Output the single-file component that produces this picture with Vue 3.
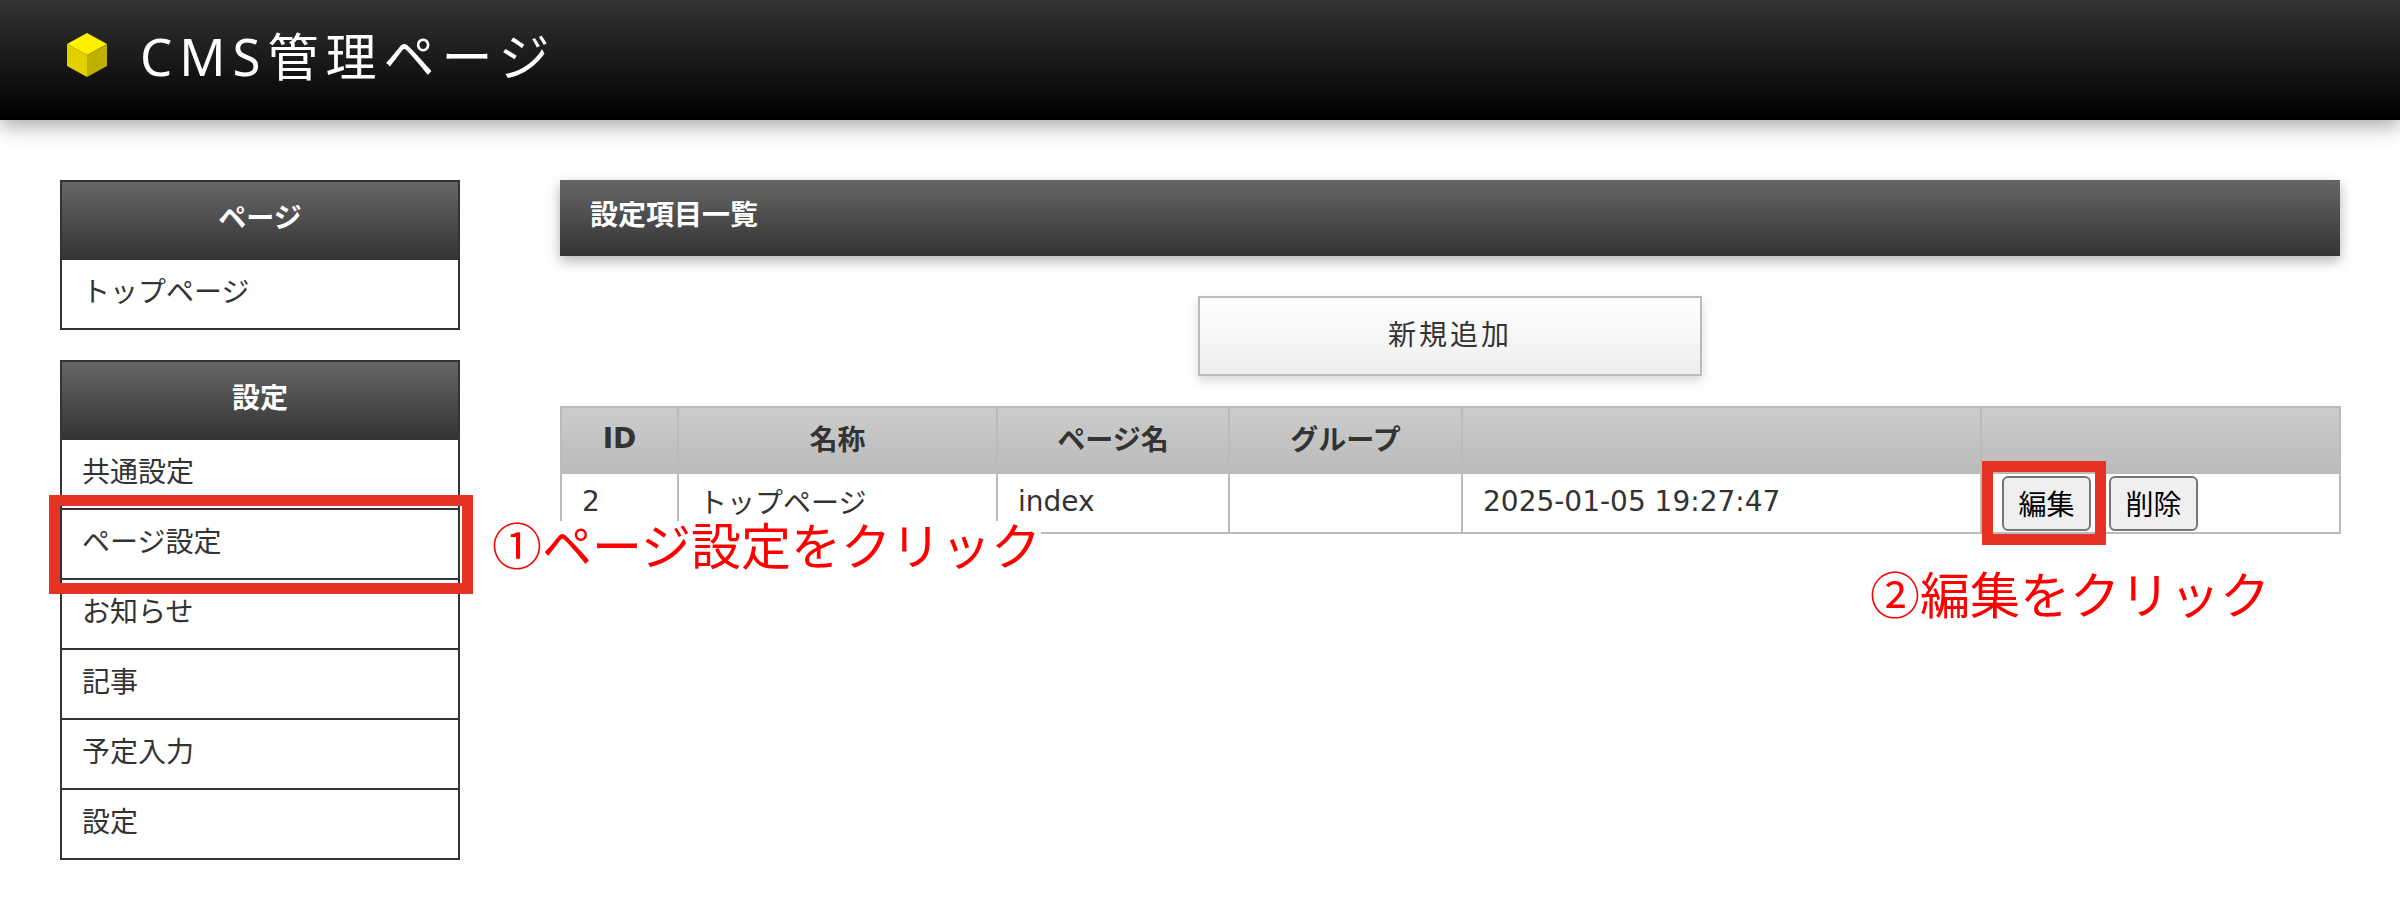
<template>
  <div class="page">
    <header class="top">
      <svg class="cube" viewBox="0 0 40 44" width="40" height="44">
        <polygon points="20,0 40,11 20,22 0,11" fill="#fff000" />
        <polygon points="0,11 20,22 20,44 0,33" fill="#e0d000" />
        <polygon points="40,11 20,22 20,44 40,33" fill="#bfb000" />
      </svg>
      <h1>CMS管理ページ</h1>
    </header>

    <div class="body">
      <aside class="side">
        <section v-for="box in menus" :key="box.title" class="box">
          <h2>{{ box.title }}</h2>
          <ul>
            <li v-for="item in box.items" :key="item">{{ item }}</li>
          </ul>
        </section>
      </aside>

      <main class="main">
        <div class="title">設定項目一覧</div>
        <div class="add-wrap">
          <button class="add">新規追加</button>
        </div>
        <table>
          <thead>
            <tr>
              <th class="c1">ID</th>
              <th class="c2">名称</th>
              <th class="c3">ページ名</th>
              <th class="c4">グループ</th>
              <th class="c5"></th>
              <th class="c6"></th>
            </tr>
          </thead>
          <tbody>
            <tr>
              <td>2</td>
              <td>トップページ</td>
              <td>index</td>
              <td></td>
              <td>2025-01-05 19:27:47</td>
              <td class="ops">
                <div class="ops-row"><button>編集</button><button>削除</button></div>
              </td>
            </tr>
          </tbody>
        </table>
      </main>
    </div>

    <!-- 説明用の注釈 -->
    <div class="mark mark-page"></div>
    <div class="mark mark-edit"></div>
    <div class="note note-page">①ページ設定をクリック</div>
    <div class="note note-edit">②編集をクリック</div>
  </div>
</template>

<script setup>
const menus = [
  { title: 'ページ', items: ['トップページ'] },
  { title: '設定', items: ['共通設定', 'ページ設定', 'お知らせ', '記事', '予定入力', '設定'] },
]
</script>

<style>
html,
body {
  background: #fff;
}
</style>

<style scoped>
.page {
  position: relative;
  width: 2400px;
  height: 919px;
  overflow: hidden;
  background: #fff;
  color: #333;
  font-family: "DejaVu Sans", "Noto Sans CJK JP", sans-serif;
  font-size: 28px;
}

.top {
  display: flex;
  align-items: center;
  gap: 33px;
  height: 120px;
  padding: 0 0 10px 67px;
  box-sizing: border-box;
  background: linear-gradient(#333, #000);
  box-shadow: 0 6px 20px rgba(0, 0, 0, 0.35);
}
.cube {
  filter: blur(0.6px);
}
.top h1 {
  margin: 0 0 2px;
  color: #fff;
  font-family: "Noto Sans", "Noto Sans CJK JP", sans-serif;
  font-size: 51px;
  font-weight: 400;
  letter-spacing: 7px;
}

.body {
  display: flex;
  gap: 100px;
  padding: 60px 60px 0;
}

.side {
  display: flex;
  flex-direction: column;
  gap: 30px;
  width: 400px;
  flex: none;
}
.box {
  border: 2px solid #333;
}
.box h2 {
  margin: 0;
  height: 78px;
  line-height: 74px;
  text-align: center;
  color: #fff;
  font-size: 28px;
  font-weight: 700;
  background: linear-gradient(#666, #333);
}
.box ul {
  margin: 0;
  padding: 0;
  list-style: none;
}
.box li {
  height: 68px;
  line-height: 66px;
  padding-left: 20px;
  border-top: 2px solid #333;
}
.box li:first-child {
  border-top: none;
}

.main {
  flex: 1;
  min-width: 0;
}
.title {
  height: 76px;
  line-height: 72px;
  padding-left: 30px;
  color: #fff;
  font-weight: 700;
  background: linear-gradient(#666, #333);
  box-shadow: 0 5px 12px rgba(0, 0, 0, 0.3);
}
.add-wrap {
  display: flex;
  justify-content: center;
  padding: 40px 0 30px;
}
.add {
  width: 504px;
  height: 80px;
  padding: 0 0 6px;
  border: 2px solid #bbb;
  color: #333;
  font: inherit;
  letter-spacing: 3px;
  background: linear-gradient(#fff, #eee);
  box-shadow: 0 5px 10px rgba(0, 0, 0, 0.15);
}

table {
  width: 1779px;
  border-collapse: collapse;
  table-layout: fixed;
}
th,
td {
  box-sizing: border-box;
  border: 2px solid #bbb;
  padding: 0 20px;
  text-align: left;
}
th {
  height: 66px;
  padding-bottom: 4px;
  text-align: center;
  font-weight: 700;
  background: linear-gradient(#ccc, #bbb);
}
td {
  height: 60px;
  padding-bottom: 4px;
}
.c1 { width: 117px; }
.c2 { width: 319px; }
.c3 { width: 232px; }
.c4 { width: 233px; }
.c5 { width: 519px; }
.c6 { width: 359px; }
td.ops {
  padding: 0;
}
.ops-row {
  display: flex;
  gap: 18px;
  padding-left: 20px;
}
.ops-row button {
  width: 89px;
  height: 55px;
  padding: 0;
  border: 2px solid #767676;
  border-radius: 6px;
  background: #efefef;
  color: #000;
  font-family: "Liberation Sans", "Noto Sans CJK JP", sans-serif;
  font-size: 28px;
}

.mark {
  position: absolute;
  border: 11px solid #e73323;
  box-sizing: border-box;
}
.mark-page {
  left: 49px;
  top: 495px;
  width: 424px;
  height: 99px;
}
.mark-edit {
  left: 1982px;
  top: 461px;
  width: 124px;
  height: 84px;
}
.note {
  position: absolute;
  padding-bottom: 6px;
  background: #fff;
  color: #f00;
  font-family: "Noto Sans CJK JP", sans-serif;
  font-size: 50px;
  line-height: 44px;
  white-space: nowrap;
}
.note-page {
  left: 492px;
  top: 521px;
}
.note-edit {
  left: 1870px;
  top: 570px;
}
</style>
